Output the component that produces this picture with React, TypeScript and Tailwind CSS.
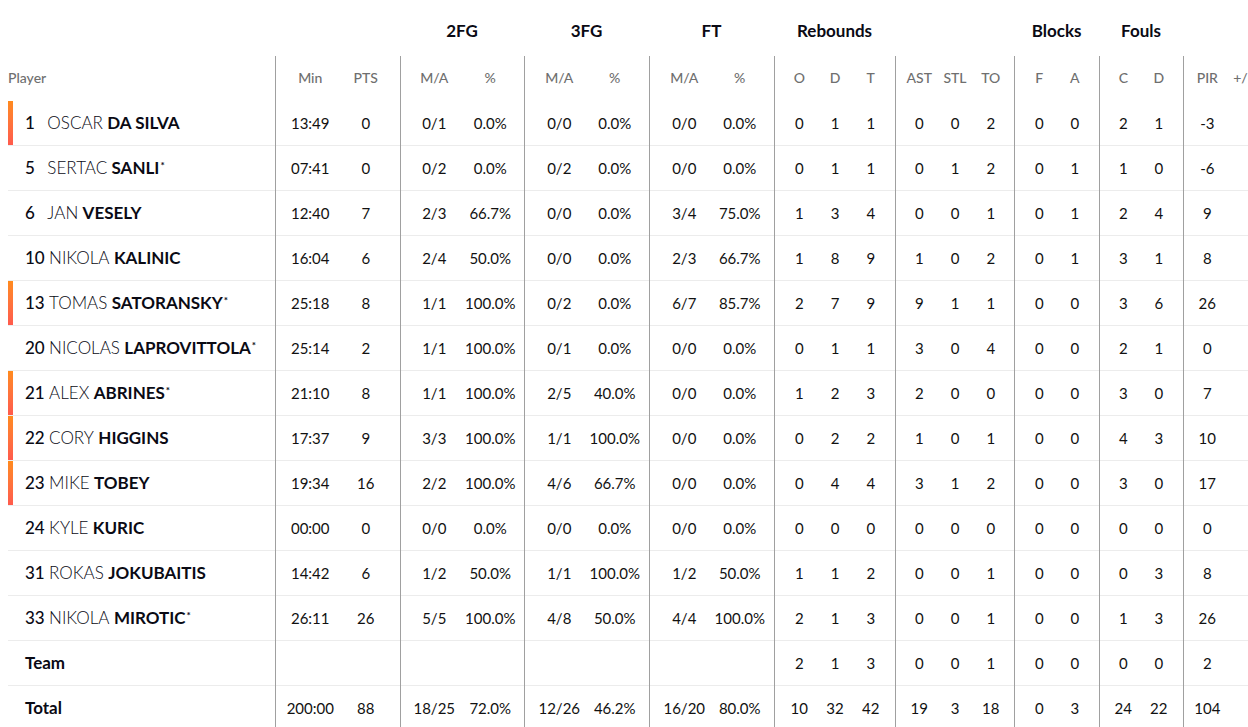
import React from "react";

type Row = {
  num?: string;
  first?: string;
  last?: string;
  label?: string;
  star?: boolean;
  bar?: boolean;
  v: string[];
};

const rows: Row[] = [
  { num: "1", first: "OSCAR", last: "DA SILVA", bar: true, v: ["13:49", "0", "0/1", "0.0%", "0/0", "0.0%", "0/0", "0.0%", "0", "1", "1", "0", "0", "2", "0", "0", "2", "1", "-3", ""] },
  { num: "5", first: "SERTAC", last: "SANLI", star: true, v: ["07:41", "0", "0/2", "0.0%", "0/2", "0.0%", "0/0", "0.0%", "0", "1", "1", "0", "1", "2", "0", "1", "1", "0", "-6", ""] },
  { num: "6", first: "JAN", last: "VESELY", v: ["12:40", "7", "2/3", "66.7%", "0/0", "0.0%", "3/4", "75.0%", "1", "3", "4", "0", "0", "1", "0", "1", "2", "4", "9", ""] },
  { num: "10", first: "NIKOLA", last: "KALINIC", v: ["16:04", "6", "2/4", "50.0%", "0/0", "0.0%", "2/3", "66.7%", "1", "8", "9", "1", "0", "2", "0", "1", "3", "1", "8", ""] },
  { num: "13", first: "TOMAS", last: "SATORANSKY", star: true, bar: true, v: ["25:18", "8", "1/1", "100.0%", "0/2", "0.0%", "6/7", "85.7%", "2", "7", "9", "9", "1", "1", "0", "0", "3", "6", "26", ""] },
  { num: "20", first: "NICOLAS", last: "LAPROVITTOLA", star: true, v: ["25:14", "2", "1/1", "100.0%", "0/1", "0.0%", "0/0", "0.0%", "0", "1", "1", "3", "0", "4", "0", "0", "2", "1", "0", ""] },
  { num: "21", first: "ALEX", last: "ABRINES", star: true, bar: true, v: ["21:10", "8", "1/1", "100.0%", "2/5", "40.0%", "0/0", "0.0%", "1", "2", "3", "2", "0", "0", "0", "0", "3", "0", "7", ""] },
  { num: "22", first: "CORY", last: "HIGGINS", bar: true, v: ["17:37", "9", "3/3", "100.0%", "1/1", "100.0%", "0/0", "0.0%", "0", "2", "2", "1", "0", "1", "0", "0", "4", "3", "10", ""] },
  { num: "23", first: "MIKE", last: "TOBEY", bar: true, v: ["19:34", "16", "2/2", "100.0%", "4/6", "66.7%", "0/0", "0.0%", "0", "4", "4", "3", "1", "2", "0", "0", "3", "0", "17", ""] },
  { num: "24", first: "KYLE", last: "KURIC", v: ["00:00", "0", "0/0", "0.0%", "0/0", "0.0%", "0/0", "0.0%", "0", "0", "0", "0", "0", "0", "0", "0", "0", "0", "0", ""] },
  { num: "31", first: "ROKAS", last: "JOKUBAITIS", v: ["14:42", "6", "1/2", "50.0%", "1/1", "100.0%", "1/2", "50.0%", "1", "1", "2", "0", "0", "1", "0", "0", "0", "3", "8", ""] },
  { num: "33", first: "NIKOLA", last: "MIROTIC", star: true, v: ["26:11", "26", "5/5", "100.0%", "4/8", "50.0%", "4/4", "100.0%", "2", "1", "3", "0", "0", "1", "0", "0", "1", "3", "26", ""] },
  { label: "Team", v: ["", "", "", "", "", "", "", "", "2", "1", "3", "0", "0", "1", "0", "0", "0", "0", "2", ""] },
  { label: "Total", v: ["200:00", "88", "18/25", "72.0%", "12/26", "46.2%", "16/20", "80.0%", "10", "32", "42", "19", "3", "18", "0", "3", "24", "22", "104", ""] },
];

type Col = { head: string; w: string; pad: string; border: boolean };

const cols: Col[] = [
  { head: "Min", w: "w-[63px]", pad: "pl-[7px]", border: true },
  { head: "PTS", w: "w-[62px]", pad: "pr-[6px]", border: false },
  { head: "M/A", w: "w-[62px]", pad: "pl-[6px]", border: true },
  { head: "%", w: "w-[62px]", pad: "pr-[5px]", border: false },
  { head: "M/A", w: "w-[63px]", pad: "pl-[7px]", border: true },
  { head: "%", w: "w-[62px]", pad: "pr-[6px]", border: false },
  { head: "M/A", w: "w-[63px]", pad: "pl-[7px]", border: true },
  { head: "%", w: "w-[62px]", pad: "pr-[6px]", border: false },
  { head: "O", w: "w-[43px]", pad: "pl-[7px]", border: true },
  { head: "D", w: "w-[36px]", pad: "", border: false },
  { head: "T", w: "w-[42px]", pad: "pr-[6px]", border: false },
  { head: "AST", w: "w-[42px]", pad: "pl-[6px]", border: true },
  { head: "STL", w: "w-[36px]", pad: "", border: false },
  { head: "TO", w: "w-[41px]", pad: "pr-[5px]", border: false },
  { head: "F", w: "w-[43px]", pad: "pl-[7px]", border: true },
  { head: "A", w: "w-[42px]", pad: "pr-[6px]", border: false },
  { head: "C", w: "w-[42px]", pad: "pl-[6px]", border: true },
  { head: "D", w: "w-[42px]", pad: "pr-[6px]", border: false },
  { head: "PIR", w: "w-[42px]", pad: "pl-[6px]", border: true },
  { head: "+/-", w: "w-[36px]", pad: "", border: false },
];

const groups: { label: string; span: number }[] = [
  { label: "", span: 2 },
  { label: "2FG", span: 2 },
  { label: "3FG", span: 2 },
  { label: "FT", span: 2 },
  { label: "Rebounds", span: 3 },
  { label: "", span: 3 },
  { label: "Blocks", span: 2 },
  { label: "Fouls", span: 2 },
  { label: "", span: 2 },
];

export default function App() {
  return (
    <div className="w-[1248px] h-[727px] overflow-hidden bg-white font-[Lato,sans-serif] text-[#111111]">
      <div className="pl-[8px]">
        <table className="table-fixed border-collapse w-[1253px]">
          <colgroup>
            <col className="w-[267px]" />
            {cols.map((c, i) => (
              <col key={i} className={c.w} />
            ))}
          </colgroup>
          <thead>
            <tr className="h-[56px]">
              <th className="p-0"></th>
              {groups.map((g, i) => (
                <th
                  key={i}
                  colSpan={g.span}
                  className="p-0 pt-[6px] text-center align-middle text-[17px] font-bold text-[#0a0a14]"
                >
                  {g.label}
                </th>
              ))}
            </tr>
            <tr className="h-[45px]">
              <th className="p-0 pb-[2px] text-left align-middle text-[14px] font-medium text-[#6f6f6f]">
                Player
              </th>
              {cols.map((c, i) => (
                <th
                  key={i}
                  className={`p-0 pb-[2px] text-center align-middle text-[14px] font-medium text-[#6f6f6f] whitespace-nowrap ${c.pad} ${
                    c.border ? "border-l border-[#a0a0a0]" : ""
                  }`}
                >
                  {c.head}
                </th>
              ))}
            </tr>
          </thead>
          <tbody>
            {rows.map((r, ri) => (
              <tr key={ri} className="border-b border-[#ececec]">
                <td className="p-0">
                  <div className="flex h-[44px] items-stretch">
                    <div
                      className={`w-[4.5px] ${
                        r.bar ? "bg-gradient-to-b from-[#ff8a1c] to-[#ff5a4c]" : ""
                      }`}
                    ></div>
                    <div className="flex items-center pl-[12.5px] whitespace-nowrap">
                      {r.label ? (
                        <span className="text-[17px] font-bold text-[#0a0a14]">{r.label}</span>
                      ) : (
                        <span className="text-[17px] text-[#0a0a14]">
                          <span className="inline-block min-w-[18px] font-medium">{r.num}</span>{" "}
                          <span className="font-light">{r.first}</span>{" "}
                          <span className="font-bold">{r.last}</span>
                          {r.star && (
                            <span className="relative -top-[5px] ml-[1px] text-[10px] font-bold">*</span>
                          )}
                        </span>
                      )}
                    </div>
                  </div>
                </td>
                {cols.map((c, i) => (
                  <td
                    key={i}
                    className={`p-0 text-center align-middle text-[15px] whitespace-nowrap text-[#111111] ${c.pad} ${
                      c.border ? "border-l border-[#a0a0a0]" : ""
                    }`}
                  >
                    {r.v[i]}
                  </td>
                ))}
              </tr>
            ))}
          </tbody>
        </table>
      </div>
    </div>
  );
}
